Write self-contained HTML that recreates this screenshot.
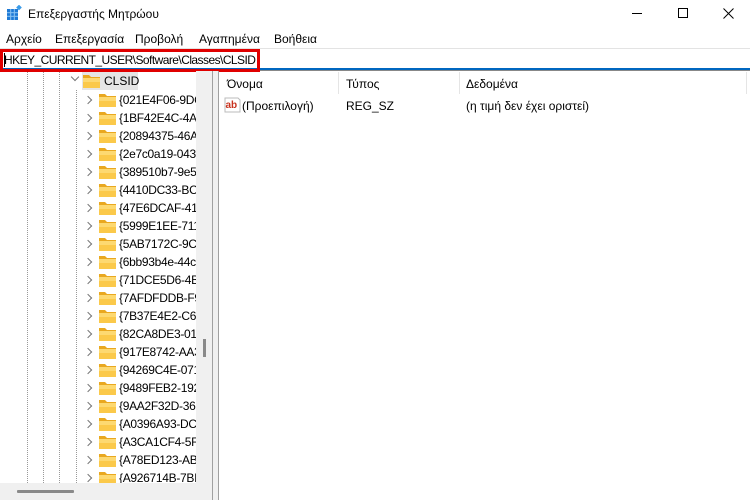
<!DOCTYPE html>
<html><head><meta charset="utf-8">
<style>
*{margin:0;padding:0;box-sizing:border-box}
body{width:750px;height:500px;overflow:hidden;background:#fff;font-family:"Segoe UI","Liberation Sans","DejaVu Sans",sans-serif;font-size:12px;color:#000;position:relative}
.abs{position:absolute}
.t{position:absolute;white-space:nowrap;line-height:16px}
.row{position:absolute;left:0;height:18px;width:196px}
.chev{position:absolute;top:4px;width:6px;height:6px;border-right:1.3px solid #777;border-bottom:1.3px solid #777;transform:rotate(-45deg)}
.fold{position:absolute;top:3px;width:17px;height:13px}
.vdot{position:absolute;top:72px;height:411px;width:1px;background-image:linear-gradient(#999 50%,transparent 50%);background-size:1px 2px}
</style></head><body>
<svg class="abs" style="left:6px;top:5px" width="16" height="16" viewBox="0 0 16 16">
<rect x="1" y="4" width="11" height="11" fill="#1e7ad6"/>
<g stroke="#8cc4f2" stroke-width="1"><line x1="4.7" y1="4" x2="4.7" y2="15"/><line x1="8.3" y1="4" x2="8.3" y2="15"/><line x1="1" y1="7.7" x2="12" y2="7.7"/><line x1="1" y1="11.3" x2="12" y2="11.3"/></g>
<rect x="11" y="0.5" width="4" height="4" fill="#3a9be8" transform="rotate(45 13 2.5)"/>
</svg>
<div class="t" style="left:28px;top:6px;font-size:12px">Επεξεργαστής Μητρώου</div>
<div class="abs" style="left:632px;top:13px;width:10px;height:1px;background:#000"></div>
<div class="abs" style="left:678px;top:8px;width:10px;height:10px;border:1px solid #000"></div>
<svg class="abs" style="left:723px;top:8px" width="11" height="11"><path d="M0.5 0.5L10.5 10.5M10.5 0.5L0.5 10.5" stroke="#000" stroke-width="1"/></svg>
<div class="t" style="left:6px;top:31px">Αρχείο</div>
<div class="t" style="left:55px;top:31px">Επεξεργασία</div>
<div class="t" style="left:135px;top:31px">Προβολή</div>
<div class="t" style="left:199px;top:31px">Αγαπημένα</div>
<div class="t" style="left:274px;top:31px">Βοήθεια</div>
<div class="abs" style="left:0;top:48px;width:750px;height:1px;background:#e3e3e3"></div>
<div class="abs" style="left:0;top:68px;width:750px;height:2px;background:#0067c0"></div>
<div class="abs" style="left:0;top:70px;width:750px;height:1px;background:#888"></div>
<div class="abs" style="left:0;top:49px;width:260px;height:23px;border:3px solid #e00000"></div>
<div class="t" style="left:4px;top:52px;letter-spacing:-0.55px">HKEY_CURRENT_USER\Software\Classes\CLSID</div>
<div class="abs" style="left:4px;top:53px;width:1px;height:14px;background:#000"></div>
<div class="vdot" style="left:27px"></div>
<div class="vdot" style="left:43px"></div>
<div class="vdot" style="left:59px"></div>
<div class="vdot" style="left:76px;top:90px;height:393px"></div>
<div class="abs" style="left:82px;top:72px;width:56px;height:18px;background:#e5e5e5"></div>
<div class="chev" style="left:72px;top:74px;transform:rotate(45deg)"></div>
<svg class="fold" style="left:83px;top:75px" viewBox="0 0 17 13"><path d="M0 0h6l2 2h9v11H0z" fill="#e9a820"/><rect x="0" y="3" width="17" height="10" fill="#fbc94a"/><rect x="0" y="3" width="17" height="4" fill="#fdd971"/></svg>
<div class="t" style="left:104px;top:73px">CLSID</div>
<div id="tree"></div>
<div class="abs" style="left:0;top:483px;width:212px;height:17px;background:#f0f0f0"></div>
<div class="abs" style="left:17px;top:490px;width:57px;height:3px;background:#8a8a8a;border-radius:1px"></div>
<div class="abs" style="left:196px;top:71px;width:16px;height:412px;background:#f0f0f0"></div>
<div class="abs" style="left:203px;top:339px;width:3px;height:18px;background:#8a8a8a"></div>
<div class="abs" style="left:212px;top:71px;width:1px;height:429px;background:#a0a0a0"></div>
<div class="abs" style="left:213px;top:71px;width:5px;height:429px;background:#f0f0f0"></div>
<div class="abs" style="left:218px;top:71px;width:1px;height:429px;background:#a0a0a0"></div>
<div class="abs" style="left:338px;top:72px;width:1px;height:22px;background:#e5e5e5"></div>
<div class="abs" style="left:459px;top:72px;width:1px;height:22px;background:#e5e5e5"></div>
<div class="abs" style="left:746px;top:72px;width:1px;height:22px;background:#e5e5e5"></div>
<div class="t" style="left:227px;top:76px">Όνομα</div>
<div class="t" style="left:346px;top:76px">Τύπος</div>
<div class="t" style="left:466px;top:76px">Δεδομένα</div>
<svg class="abs" style="left:224px;top:97px" width="17" height="16" viewBox="0 0 17 16"><path d="M1 1h13l2 2v12H1z" fill="#fff" stroke="#bbb"/><text x="1.5" y="11" font-family="Liberation Sans,sans-serif" font-size="10" font-weight="bold" fill="#c8321e">ab</text></svg>
<div class="t" style="left:242px;top:98px">(Προεπιλογή)</div>
<div class="t" style="left:346px;top:98px">REG_SZ</div>
<div class="t" style="left:466px;top:98px">(η τιμή δεν έχει οριστεί)</div>
<script>
var n=["{021E4F06-9DC","{1BF42E4C-4A","{20894375-46A","{2e7c0a19-043","{389510b7-9e5","{4410DC33-BC","{47E6DCAF-41","{5999E1EE-711","{5AB7172C-9C","{6bb93b4e-44c","{71DCE5D6-4B","{7AFDFDDB-F9","{7B37E4E2-C62","{82CA8DE3-01","{917E8742-AA3","{94269C4E-071","{9489FEB2-192","{9AA2F32D-36","{A0396A93-DC","{A3CA1CF4-5F","{A78ED123-AB","{A926714B-7BI"];
var h="";for(var i=0;i<n.length;i++){var y=91+i*18;
h+='<div class="row" style="top:'+y+'px;overflow:hidden">'+
'<div class="chev" style="left:85px;top:6px"></div>'+
'<svg class="fold" style="left:99px;top:3px" viewBox="0 0 17 13"><path d="M0 0h6l2 2h9v11H0z" fill="#e9a820"/><rect x="0" y="3" width="17" height="10" fill="#fbc94a"/><rect x="0" y="3" width="17" height="4" fill="#fdd971"/></svg>'+
'<div class="t" style="left:119px;top:1px;letter-spacing:-0.3px">'+n[i]+'</div></div>';}
document.getElementById("tree").innerHTML=h;
</script>
</body></html>
